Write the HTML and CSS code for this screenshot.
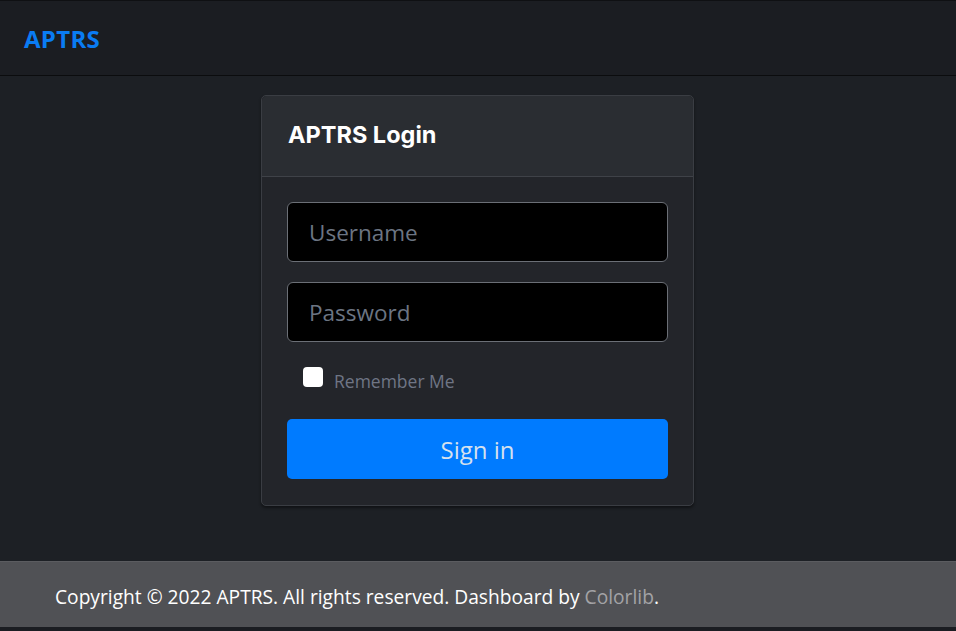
FILE: index.html
```html
<!DOCTYPE html>
<html lang="en">
<head>
    <meta charset="UTF-8">
    <meta name="viewport" content="width=device-width, initial-scale=1.0">
    <title>APTRS Login</title>
    <link rel="stylesheet" href="styles.css">
</head>
<body>
    <header class="topbar">
        <a href="/" class="brand">APTRS</a>
    </header>
    <main class="content">
        <div class="card">
            <div class="card-header">
                <h1 class="card-title">APTRS Login</h1>
            </div>
            <form class="card-body">
                <input type="text" class="field" name="username" placeholder="Username">
                <input type="password" class="field" name="password" placeholder="Password">
                <label class="remember">
                    <input type="checkbox" class="check" name="remember">
                    <span>Remember Me</span>
                </label>
                <button type="button" class="button">Sign in</button>
            </form>
        </div>
    </main>
    <footer class="footer">
        <p>Copyright &copy; 2022 APTRS. All rights reserved. Dashboard by <a href="#" class="credit">Colorlib</a>.</p>
    </footer>
</body>
</html>
```

FILE: styles.css
```css
* {
    box-sizing: border-box;
}
body {
    margin: 0;
    padding: 0;
    font-family: "Open Sans", "Noto Sans", "Liberation Sans", sans-serif;
    background-color: #1d2025;
    border-top: 1px solid #0f1013;
    border-bottom: 4px solid #1b1d22;
}
.topbar {
    height: 75px;
    padding: 0 24px;
    display: flex;
    align-items: center;
    background-color: #1b1d22;
    border-bottom: 1px solid #0b0c0e;
}
.brand {
    text-decoration: none;
    color: #0a7cf3;
    font-size: 24px;
    font-weight: 700;
    letter-spacing: 0.3px;
}
.content {
    padding: 19px 0 55px;
    display: flex;
    justify-content: center;
}
.card {
    width: 433px;
    margin-right: 1px;
    background-color: #23252a;
    border: 1px solid #3a3d43;
    border-radius: 5px;
    box-shadow: 0 2px 3px rgba(0, 0, 0, 0.45);
}
.card-header {
    height: 81px;
    padding: 0 26px;
    display: flex;
    align-items: center;
    background-color: #2a2d32;
    border-bottom: 1px solid #3f4248;
    border-radius: 5px 5px 0 0;
}
.card-title {
    margin: 0 0 4px;
    color: #fff;
    font-family: "Inter", "Lato", sans-serif;
    font-size: 23.5px;
    font-weight: 700;
}
.card-body {
    padding: 25px 25px 26px;
    display: flex;
    flex-direction: column;
}
.field {
    height: 60px;
    margin-bottom: 20px;
    padding: 0 21px;
    background-color: #000;
    border: 1px solid #6b6f76;
    border-radius: 6px;
    color: #fff;
    font-family: inherit;
    font-size: 22.5px;
}
.field::placeholder {
    color: #6c7583;
}
.remember {
    display: flex;
    align-items: center;
    padding-left: 16px;
    margin: 4px 0 0;
    height: 30px;
    color: #6f7585;
    font-size: 17.5px;
}
.check {
    appearance: none;
    width: 20px;
    height: 20px;
    margin: 0 11px 0 0;
    background-color: #fff;
    border-radius: 4px;
    position: relative;
    top: -4px;
}
.button {
    height: 60px;
    margin-top: 23px;
    background-color: #007bff;
    border: none;
    border-radius: 5px;
    color: #d6e1ee;
    font-family: inherit;
    font-size: 24px;
}
.footer {
    height: 66px;
    padding: 0 55px;
    display: flex;
    align-items: center;
    background-color: #505155;
    border-top: 1px solid #5b5c60;
}
.footer p {
    margin: 4px 0 0;
    color: #fff;
    font-size: 19.2px;
}
.credit {
    text-decoration: none;
    color: #a3a3a6;
}
```
